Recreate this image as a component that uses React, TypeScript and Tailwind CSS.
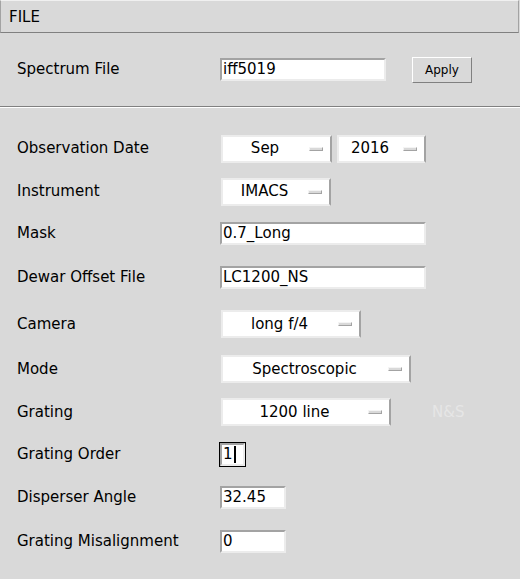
import React from "react";

const font = { fontFamily: '"DejaVu Sans", sans-serif' };

function Label({ children }: { children: React.ReactNode }) {
  return <div className="w-[220px] shrink-0 pl-[17px] text-[15px] text-black">{children}</div>;
}

function Entry({ value, width, focus }: { value: string; width: number; focus?: boolean }) {
  if (focus) {
    return (
      <div className="ml-[-1px] border border-black">
        <div
          className="flex h-[23px] items-center border-2 border-t-[#a3a3a3] border-l-[#a3a3a3] border-b-[#ececec] border-r-[#ececec] bg-white pl-[1px] text-[15px] text-black"
          style={{ width: width - 2 }}
        >
          <span>{value}</span>
          <span className="ml-[1px] inline-block h-[17px] w-[2px] bg-black" />
        </div>
      </div>
    );
  }
  return (
    <div
      className="flex h-[23px] items-center border-2 border-t-[#a3a3a3] border-l-[#a3a3a3] border-b-[#ececec] border-r-[#ececec] bg-white pl-[1px] text-[15px] text-black"
      style={{ width }}
    >
      {value}
    </div>
  );
}

function Menu({ value, width, className = "" }: { value: string; width: number; className?: string }) {
  return (
    <div
      className={`flex h-[28px] items-center border-2 border-t-[#ececec] border-l-[#ececec] border-b-[#ececec] border-r-[#a3a3a3] bg-white text-[15px] text-black ${className}`}
      style={{ width }}
    >
      <div className="flex-1 pr-[2px] text-center">{value}</div>
      <div className="mr-[7px] h-[4px] w-[14px] border border-t-[#f4f4f4] border-l-[#f4f4f4] border-b-[#a3a3a3] border-r-[#a3a3a3] bg-[#d9d9d9]" />
    </div>
  );
}

export default function App() {
  return (
    <div className="h-[579px] w-[520px] overflow-hidden bg-[#d9d9d9]" style={font}>
      <div className="flex h-[33px] w-[519px] items-center border border-t-[#f0f0f0] border-l-[#a3a3a3] border-r-[#a3a3a3] border-b-[#808080] pl-[8px] pt-[1px] text-[15px] text-black">
        FILE
      </div>
      <div className="flex h-[73px] items-center">
        <Label>Spectrum File</Label>
        <Entry value="iff5019" width={166} />
        <div className="ml-[26px] flex h-[26px] w-[60px] items-center justify-center border border-t-white border-l-white border-b-[#808080] border-r-[#808080] text-[12px] text-black">
          Apply
        </div>
      </div>
      <div className="h-px bg-[#808080]" />
      <div className="h-px bg-white" />
      <div className="pt-[19px]">
        <div className="flex h-[43px] items-center">
          <Label>Observation Date</Label>
          <Menu value="Sep" width={111} className="ml-[1px]" />
          <Menu value="2016" width={89} className="ml-[5px]" />
        </div>
        <div className="flex h-[43px] items-center">
          <Label>Instrument</Label>
          <Menu value="IMACS" width={110} className="ml-[1px]" />
        </div>
        <div className="flex h-[41px] items-center">
          <Label>Mask</Label>
          <Entry value="0.7_Long" width={206} />
        </div>
        <div className="flex h-[46px] items-center">
          <Label>Dewar Offset File</Label>
          <Entry value="LC1200_NS" width={206} />
        </div>
        <div className="flex h-[48px] items-center">
          <Label>Camera</Label>
          <Menu value="long f/4" width={140} className="ml-[1px]" />
        </div>
        <div className="flex h-[42px] items-center">
          <Label>Mode</Label>
          <Menu value="Spectroscopic" width={190} className="ml-[1px]" />
        </div>
        <div className="flex h-[44px] items-center">
          <Label>Grating</Label>
          <Menu value="1200 line" width={170} className="ml-[1px]" />
          <div className="ml-[41px] text-[15px] text-[#e6e6e6]">N&amp;S</div>
        </div>
        <div className="flex h-[40px] items-center">
          <Label>Grating Order</Label>
          <Entry value="1" width={27} focus />
        </div>
        <div className="flex h-[46px] items-center">
          <Label>Disperser Angle</Label>
          <Entry value="32.45" width={66} />
        </div>
        <div className="flex h-[42px] items-center">
          <Label>Grating Misalignment</Label>
          <Entry value="0" width={66} />
        </div>
      </div>
    </div>
  );
}
